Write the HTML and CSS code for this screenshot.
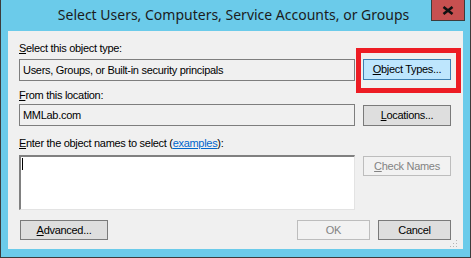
FILE: index.html
```html
<!DOCTYPE html>
<html>
<head>
<meta charset="utf-8">
<link rel="stylesheet" href="styles.css">
</head>
<body>
<div class="window">
  <div class="titlebar">
    <div class="title">Select Users, Computers, Service Accounts, or Groups</div>
    <div class="close">
      <svg width="12" height="9" viewBox="0 0 12 9"><path d="M1.5 1 L10.5 8 M10.5 1 L1.5 8" stroke="#111" stroke-width="2.6" fill="none"/></svg>
    </div>
  </div>
  <div class="client">
    <div class="label l1"><u>S</u>elect this object type:</div>
    <div class="row">
      <div class="field ro">Users, Groups, or Built-in security principals</div>
      <div class="btn-wrap">
        <div class="btn focus"><u>O</u>bject Types...</div>
        <div class="highlight"></div>
      </div>
    </div>
    <div class="label l2"><u>F</u>rom this location:</div>
    <div class="row">
      <div class="field ro">MMLab.com</div>
      <div class="btn off1"><u>L</u>ocations...</div>
    </div>
    <div class="label l3"><u>E</u>nter the object names to select (<span class="link">examples</span>):</div>
    <div class="row">
      <div class="field area"><span class="caret"></span></div>
      <div class="btn disabled short off1"><u>C</u>heck Names</div>
    </div>
    <div class="row bottom">
      <div class="btn short adv"><u>A</u>dvanced...</div>
      <div class="spacer"></div>
      <div class="btn short small disabled">OK</div>
      <div class="btn short small">Cancel</div>
    </div>
    <svg class="grip" width="8" height="8" viewBox="0 0 8 8">
      <rect x="6" y="0" width="1" height="1" fill="#b5b5b5"/>
      <rect x="3" y="3" width="1" height="1" fill="#b5b5b5"/>
      <rect x="6" y="3" width="1" height="1" fill="#b5b5b5"/>
      <rect x="0" y="6" width="1" height="1" fill="#b5b5b5"/>
      <rect x="3" y="6" width="1" height="1" fill="#b5b5b5"/>
      <rect x="6" y="6" width="1" height="1" fill="#b5b5b5"/>
    </svg>
  </div>
</div>
</body>
</html>
```
FILE: styles.css
```css
html, body { margin: 0; padding: 0; }
body { width: 471px; height: 258px; overflow: hidden; }
.window {
  box-sizing: border-box;
  width: 471px; height: 258px;
  background: #6bcbea;
  border: 1px solid #3c3c3c;
  border-top: none;
  padding: 0 7px 8px 7px;
  display: flex; flex-direction: column;
  position: relative;
  font-family: "Liberation Sans", Arial, sans-serif;
  font-size: 11px;
  letter-spacing: -0.3px;
  color: #000;
}
.titlebar { height: 31px; position: relative; display: flex; justify-content: center; }
.title {
  font-family: "Noto Sans", "Open Sans", sans-serif;
  font-size: 14px;
  letter-spacing: 0;
  color: #1c1c1c;
  padding-top: 5px;
  line-height: 20px;
  margin-left: -4px;
}
.close {
  position: absolute; right: -2px; top: 0;
  width: 32px; height: 20px;
  background: #c75050;
  border: 1px solid #3c3c3c; border-top: none;
  display: flex; align-items: center; justify-content: center;
}
.client {
  flex: 1;
  background: #f0f0f0;
  padding: 11px 0 0 11px;
  position: relative;
}
.label { line-height: 13px; height: 13px; white-space: nowrap; }
.l1 { margin-bottom: 4px; }
.l2 { margin-top: 8px; margin-bottom: 2px; }
.l3 { margin-top: 11px; margin-bottom: 5px; }
.row { display: flex; gap: 8px; align-items: flex-start; }
.field { box-sizing: border-box; width: 336px; }
.ro {
  height: 22px;
  border: 1px solid #7e7e7e;
  padding: 0 3px;
  line-height: 20px;
  white-space: nowrap;
}
.area {
  height: 55px;
  background: #fff;
  border-top: 2px solid #808080;
  border-left: 2px solid #808080;
  border-right: 1px solid #e3e3e3;
  border-bottom: 1px solid #e3e3e3;
  padding: 1px 0 0 1px;
}
.caret { display: block; width: 1px; height: 12px; background: #000; }
.btn-wrap { position: relative; }
.btn {
  box-sizing: border-box;
  width: 88px; height: 21px;
  background: #dedede;
  border: 1px solid #7a7a7a;
  text-align: center;
  line-height: 19px;
  white-space: nowrap;
}
.btn.short { height: 20px; line-height: 18px; }
.btn.focus { background: #bee6fd; border-color: #3c7fb1; }
.btn.disabled { background: #f2f2f2; border-color: #bdbdbd; color: #838383; }
.off1 { margin-top: 1px; }
.highlight {
  position: absolute;
  left: -7px; top: -11px; right: -10px; bottom: -13px;
  border: 5px solid #ed1c24;
}
.bottom { margin-top: 10px; gap: 0; }
.adv { margin-left: 1px; }
.spacer { flex: 0 0 189px; }
.small { width: 73px; margin-right: 8px; }
.link { color: #0066cc; text-decoration: underline; }
.grip { position: absolute; right: 5px; bottom: 1px; }
```
